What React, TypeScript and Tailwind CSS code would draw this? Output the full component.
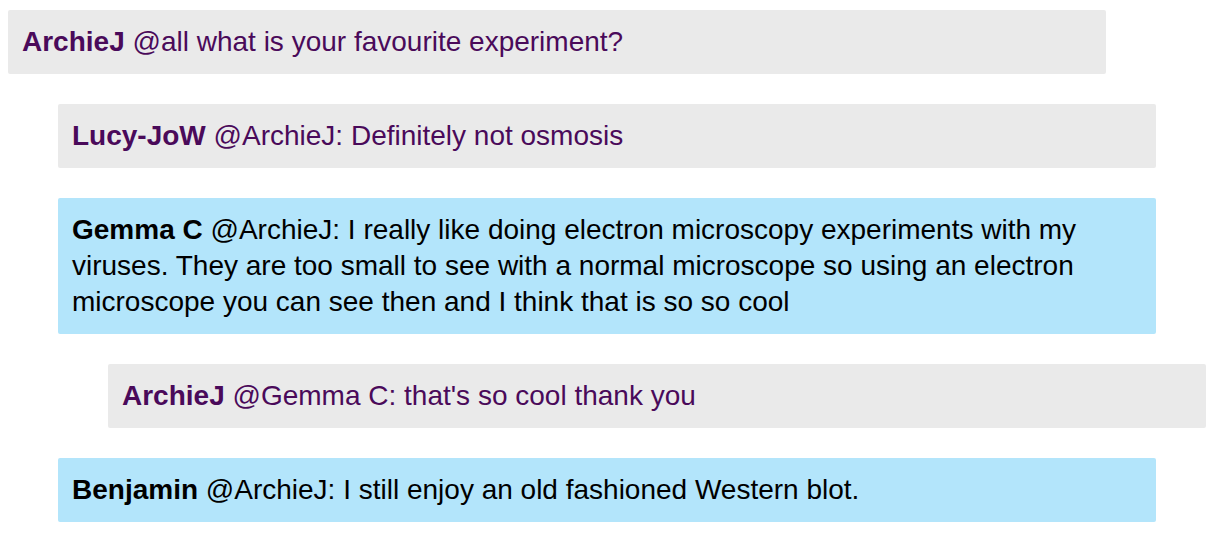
const messages = [
  { depth: 0, author: "ArchieJ", text: "@all what is your favourite experiment?", tone: "grey" },
  { depth: 1, author: "Lucy-JoW", text: "@ArchieJ: Definitely not osmosis", tone: "grey" },
  {
    depth: 1,
    author: "Gemma C",
    text: "@ArchieJ: I really like doing electron microscopy experiments with my viruses. They are too small to see with a normal microscope so using an electron microscope you can see then and I think that is so so cool",
    tone: "blue",
  },
  { depth: 2, author: "ArchieJ", text: "@Gemma C: that's so cool thank you", tone: "grey" },
  { depth: 1, author: "Benjamin", text: "@ArchieJ: I still enjoy an old fashioned Western blot.", tone: "blue" },
];

const indent = ["ml-0", "ml-[50px]", "ml-[100px]"];

export default function App() {
  return (
    <div className="min-h-screen bg-white pt-[10px] pl-[8px] font-['Liberation_Sans',Arial,sans-serif]">
      <ul className="flex flex-col gap-[30px]">
        {messages.map((m, i) => (
          <li
            key={i}
            className={`${indent[m.depth]} w-[1098px] rounded-[2px] px-[14px] py-[14px] text-[28px] leading-[36px] ${
              m.tone === "blue" ? "bg-[#b3e5fb] text-black" : "bg-[#eaeaea] text-[#4a0a5a]"
            }`}
          >
            <span className="font-bold">{m.author}</span> {m.text}
          </li>
        ))}
      </ul>
    </div>
  );
}
